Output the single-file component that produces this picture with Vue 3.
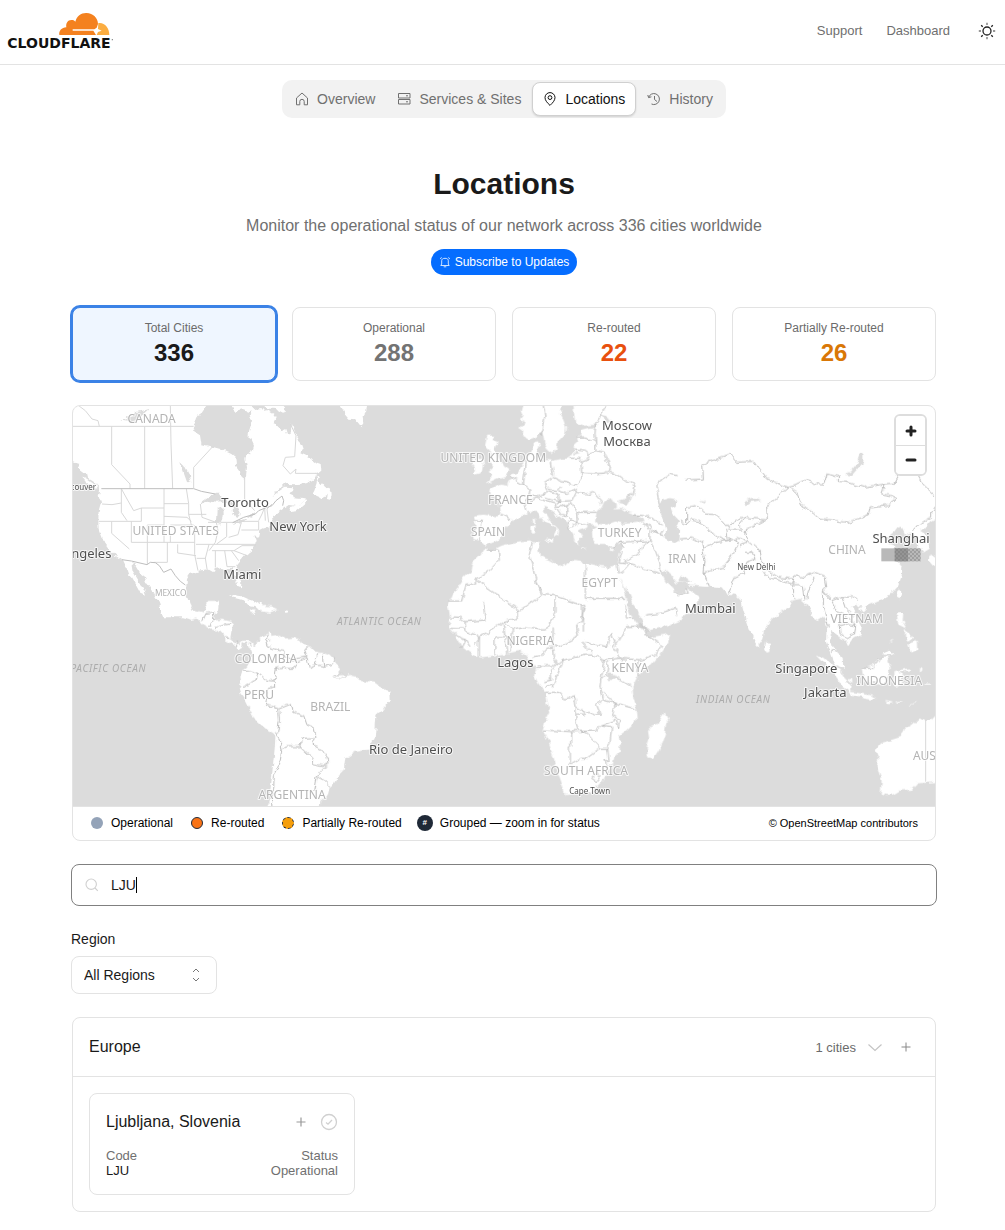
<script setup>
import { ref, computed } from 'vue'

const tabs = [
  { name: 'Overview', icon: 'home' },
  { name: 'Services & Sites', icon: 'stack' },
  { name: 'Locations', icon: 'pin' },
  { name: 'History', icon: 'history' },
]
const stats = [
  { label: 'Total Cities', value: 336, tone: 'dark' },
  { label: 'Operational', value: 288, tone: 'grey' },
  { label: 'Re-routed', value: 22, tone: 'red' },
  { label: 'Partially Re-routed', value: 26, tone: 'amber' },
]
const selected = ref('Total Cities')
const query = ref('LJU')
const region = ref('All Regions')
const allCities = [{ name: 'Ljubljana, Slovenia', code: 'LJU', status: 'Operational' }]
const cities = computed(() => allCities.filter((c) => c.code.includes(query.value.toUpperCase())))

// Map units are three to a pixel.
const labels = [
  { t: 'CANADA', x: 236, y: 51, k: 'country' },
  { t: 'UNITED STATES', x: 308, y: 387, k: 'country' },
  { t: 'MEXICO', x: 293, y: 570, k: 'minor' },
  { t: 'COLOMBIA', x: 579, y: 771, k: 'country' },
  { t: 'PERU', x: 558, y: 878, k: 'country' },
  { t: 'BRAZIL', x: 772, y: 914, k: 'country' },
  { t: 'ARGENTINA', x: 657, y: 1180, k: 'country' },
  { t: 'UNITED KINGDOM', x: 1261, y: 169, k: 'country' },
  { t: 'FRANCE', x: 1312, y: 294, k: 'country' },
  { t: 'SPAIN', x: 1245, y: 391, k: 'country' },
  { t: 'TURKEY', x: 1640, y: 392, k: 'country' },
  { t: 'IRAN', x: 1828, y: 472, k: 'country' },
  { t: 'EGYPT', x: 1580, y: 544, k: 'country' },
  { t: 'NIGERIA', x: 1372, y: 717, k: 'country' },
  { t: 'KENYA', x: 1671, y: 797, k: 'country' },
  { t: 'SOUTH AFRICA', x: 1539, y: 1107, k: 'country' },
  { t: 'CHINA', x: 2322, y: 445, k: 'country' },
  { t: 'VIETNAM', x: 2351, y: 652, k: 'country' },
  { t: 'INDONESIA', x: 2449, y: 836, k: 'country' },
  { t: 'AUSTRALIA', x: 2614, y: 1063, k: 'country' },
  { t: 'ATLANTIC OCEAN', x: 919, y: 658, k: 'ocean' },
  { t: 'PACIFIC OCEAN', x: 106, y: 799, k: 'ocean' },
  { t: 'INDIAN OCEAN', x: 1981, y: 891, k: 'ocean' },
  { t: 'Vancouver', x: 10, y: 252, k: 'town' },
  { t: 'New Delhi', x: 2050, y: 492, k: 'town' },
  { t: 'Cape Town', x: 1550, y: 1163, k: 'town' },
  { t: 'Toronto', x: 516, y: 304, k: 'city' },
  { t: 'New York', x: 675, y: 375, k: 'city' },
  { t: 'Los Angeles', x: 6, y: 457, k: 'city' },
  { t: 'Miami', x: 508, y: 519, k: 'city' },
  { t: 'Rio de Janeiro', x: 1014, y: 1044, k: 'city' },
  { t: 'Lagos', x: 1327, y: 782, k: 'city' },
  { t: 'Moscow', x: 1662, y: 72, k: 'city' },
  { t: 'Москва', x: 1662, y: 120, k: 'city' },
  { t: 'Mumbai', x: 1912, y: 622, k: 'city' },
  { t: 'Singapore', x: 2200, y: 800, k: 'city' },
  { t: 'Jakarta', x: 2257, y: 874, k: 'city' },
  { t: 'Shanghai', x: 2484, y: 411, k: 'city' },
]
</script>

<template>
  <div class="page">
    <header class="topbar">
      <a href="#" class="logo" aria-label="Cloudflare">
        <svg viewBox="0 0 345 150" width="115" height="50">
          <path fill="#f4811f" d="M178 105C176 92 185 83 199 82C197 70 203 60 214 60C219 59 223 61 226 65C230 48 243 39 258 39C278 38 294 54 294 72L290 83L283 88H218V92H280L288 105Z" />
          <path fill="#fbad41" d="M295 69C313 66 328 82 328 105H290L294 96L305 92L294 87Z" />
          <text x="22" y="143" class="brand">CLOUDFLARE</text>
          <circle cx="337" cy="119" r="2" fill="#777" />
        </svg>
      </a>
      <nav class="toplinks">
        <a href="#">Support</a>
        <a href="#">Dashboard</a>
        <button class="plain sun" aria-label="Toggle theme">
          <svg viewBox="0 0 18 18" width="18" height="18" fill="none" stroke="#222" stroke-width="1.3">
            <circle cx="9" cy="9" r="4" />
            <path d="M3.200 3.200l1.500 1.500M13.300 13.300l1.500 1.500M3.200 14.800l1.500-1.500M13.300 4.700l1.500-1.500" />
            <path stroke="#777" d="M9 .8V3M9 15v2.200M.8 9H3M15 9h2.200" />
          </svg>
        </button>
      </nav>
    </header>

    <main>
      <nav class="tabs">
        <a v-for="t in tabs" :key="t.name" href="#" class="tab" :class="{ active: t.name === 'Locations' }">
          <svg viewBox="0 0 14 14" width="14" height="14" fill="none" stroke="currentColor" stroke-width="1" stroke-linejoin="round">
            <path v-if="t.icon === 'home'" d="M1.500 6L7 1l5.500 5v6.800H9.200V9.500a2.200 2.200 0 0 0-4.400 0v3.300H1.500Z" />
            <template v-else-if="t.icon === 'stack'">
              <rect x="1.500" y="1.500" width="11.500" height="4.500" />
              <rect x="1.500" y="7.500" width="11.500" height="4.500" />
              <path d="M9 3.800h2M9 9.800h2" />
            </template>
            <template v-else-if="t.icon === 'pin'">
              <path d="M7 13.400C4.500 11 2 8.500 2 5.600a5 5 0 0 1 10 0C12 8.500 9.500 11 7 13.400Z" />
              <circle cx="7" cy="5.600" r="1.900" />
            </template>
            <path v-else d="M.8 3l.8 2.600 2.800-.8M1.700 5.300A5.500 5.500 0 1 1 4.500 12M7.500 4v3.500l2.500 2" />
          </svg>
          <span>{{ t.name }}</span>
        </a>
      </nav>

      <section class="intro">
        <h1>Locations</h1>
        <p>Monitor the operational status of our network across 336 cities worldwide</p>
        <button class="subscribe">
          <svg viewBox="0 0 12 12" width="12" height="12" fill="none" stroke="#fff" stroke-width=".8">
            <path d="M1.800 9.500l.9-1.500V4.700C2.700 3.200 3.700 2.300 6 2.300s3.300.9 3.300 2.400V8l.9 1.500ZM4.700 10.800h2.600M1.300 3l1.200-1.700M10.700 3L9.500 1.300" />
          </svg>
          <span>Subscribe to Updates</span>
        </button>
      </section>

      <section class="stats">
        <button v-for="s in stats" :key="s.label" class="stat" :class="{ selected: s.label === selected }" @click="selected = s.label">
          <span class="stat-label">{{ s.label }}</span>
          <strong :class="s.tone">{{ s.value }}</strong>
        </button>
      </section>

      <section class="mapcard">
        <div class="map">
          <svg class="world" viewBox="0 0 2586 1200" preserveAspectRatio="xMidYMid slice" role="img" aria-label="World map">
            <defs>
              <pattern id="hatch" width="12" height="12" patternUnits="userSpaceOnUse">
                <path d="M0 0L12 12M12 0L0 12" stroke="#777" stroke-width="2" />
              </pattern>
              <!-- Breaks straight coast segments into an irregular shoreline. -->
              <filter id="rough" filterUnits="userSpaceOnUse" x="-20" y="-20" width="2626" height="1240" color-interpolation-filters="sRGB">
                <feTurbulence type="fractalNoise" baseFrequency=".05" numOctaves="2" seed="4" result="n" />
                <feDisplacementMap in="SourceGraphic" in2="n" scale="18" xChannelSelector="R" yChannelSelector="G" />
              </filter>
            </defs>

            <!-- North America -->
            <g filter="url(#rough)">
              <g class="land" transform="translate(-3 -6)">
                <path d="M-20 -20H412L408 0L395 15L375 45L368 68L365 82L384 94L388 120L420 128L445 135L478 150L490 160L492 185L504 202L506 215L515 222L522 215L525 190L520 165L525 155L540 145L546 125L538 108L529 102L532 75L540 50L533 30L545 15L565 12L575 24L585 18L605 30L614 42L608 55L614 65L625 82L640 75L645 90L655 85L660 60L668 85L680 98L676 105L690 120L695 135L688 145L705 152L709 160L720 165L735 176L746 180L748 200L735 210L733 220L720 229L700 238L670 241L640 240L620 255L600 278L612 268L640 248L665 250L662 262L650 268L662 273L665 283L690 285L706 287L690 299L665 320L650 325L652 312L668 305L650 303L625 320L600 340L602 350L590 358L602 366L575 374L562 381L558 398L552 406L547 390L545 398L551 412L548 425L540 437L520 452L510 464L500 475L494 490L498 510L508 535L507 550L498 546L490 528L488 505L478 492L470 492L455 497L440 490L428 492L426 504L414 497L400 500L375 503L355 510L345 525L343 545L342 570L350 592L360 640H272L262 600L255 585L235 550L225 538L218 520L205 510L190 485L178 477L182 500L200 530L208 550L218 560L222 572L205 565L190 537L180 520L172 512L166 495L160 490L150 468L130 455L115 440L105 426L90 405L80 378L79 350L80 320L87 295L80 275L84 265L80 250L62 230L45 220L42 208L25 195L15 180L-20 165Z" />
                <path d="M30 216L46 225L75 246L72 251L50 242Z" />
                <path d="M735 215L742 218L736 233L745 242L748 235L760 250L770 248L778 262L779 277L774 287L765 285L767 272L755 278L740 281L720 272L727 260L734 240Z" />
                <path d="M648 310L668 306L682 306L705 287L705 296L675 322L655 324Z" />
                <path d="M474 0L490 20L505 16L530 24L548 21L540 10L520 0ZM565 0L585 14L610 14L633 26L646 22L635 9L615 0ZM803 0L820 30L832 44L850 46L866 66L874 55L872 40L882 22L886 0Z" />
                <path d="M470 582L490 574L510 577L530 586L550 592L574 606L560 611L535 607L520 591L500 585L485 581Z" />
              </g>
              <path class="water" d="M386 300L392 284L410 272L430 260L440 260L445 272L462 282L464 292L445 286L428 287L410 284ZM434 310L448 300L449 330L442 356L432 350ZM465 282L485 290L500 320L488 335L480 320L478 300ZM478 356L505 342L525 336L512 350ZM520 330L546 320L550 328L535 335ZM322 168L334 180L347 205L352 230L342 228L332 200ZM145 44L165 38L158 30L178 32L190 18L215 12L228 8L210 25L195 42L172 48Z" />
            </g>
            <g transform="translate(-3 -6)">
              <path class="state" d="M20 5L40 20L60 45L78 50L82 67M0 67H365M119 67V182L174 240V254M218 67V254M295 5L297 120L302 254M365 190L422 128M365 190V252M518 222V285L548 320M655 60L672 95L668 158L640 160L633 185L655 210L672 195L670 208H737M90 300L120 302L148 297M148 254V325L165 350M148 254L165 285L185 320L208 312M208 352V312H276M276 254V415M276 299H350M276 337L345 340L358 352M343 254L350 299V331H403M80 352H208M119 352V388L172 435M178 352V415M178 415H368M226 363V480M226 363H276M295 363H365M295 388V415M286 415V475H245M317 421V447L372 455M368 363V452L378 500M372 421H411L400 463L405 495M374 463H402M350 331L358 363L372 385M408 355H433L438 380L430 415L411 440M445 355H508M464 357V398L434 420M508 355L498 392L470 400M508 352H560V378H508M420 440H486L510 425H552M411 421H552M430 440V490M458 440L465 488M465 488H490M478 440L500 470M486 440L525 455M560 350L570 330L578 310L580 350M590 355L585 315L600 300M385 300L390 340L432 355" />
              <path class="country" d="M88 254H365L388 262L430 270M482 356L515 340L550 330L560 320L580 312L600 305L612 290L630 276L635 290L632 305M150 467L178 471L225 482L235 475L250 476L262 485L275 505L297 495L310 515L325 532L340 543M415 600H440" />
            </g>

            <g filter="url(#rough)">
              <!-- Central and South America -->
              <g transform="translate(-3 597)">
                <g class="land">
                  <path d="M258 -16L270 12L300 25L330 32L355 45L375 40L392 58L415 70L440 75L458 95L460 105L490 122L500 132L510 125L512 115L525 112L530 128L538 132L540 145L535 165L525 185L512 195L505 215L508 235L500 250L505 265L520 285L535 315L550 345L580 370L605 385L610 400L608 430L603 480L597 540L590 590L578 625H738L742 590L770 570L775 547L795 515L815 495L818 475L820 458L850 438L890 430L908 400L910 375L913 330L935 310L953 285L952 258L930 250L905 233L865 228L855 218L838 216L830 208L790 213L806 190L792 178L788 165L775 151L755 145L730 140L710 120L695 118L685 105L665 98L640 100L615 90L598 93L597 83L575 92L560 108L545 122L530 108L515 107L500 122L485 112L475 98L478 80L483 60L475 50L450 44L428 46L428 32L438 14L441 -12H408L395 22L365 15L350 -16Z" />
                  <path d="M555 6L578 3L598 4L620 15L600 20L590 23L565 18ZM530 16H552L545 24H533ZM636 16H650V23H637Z" />
                </g>
                <path class="country" d="M392 48L402 25L425 22V45L412 62M430 68L455 60L475 57M458 95L472 98M490 122L497 112M538 125L530 115M590 88L580 105L585 125L605 132L635 140L640 155L650 155L658 165L675 160L705 155L698 135L710 122M610 190L632 186L640 190L665 190L675 172L705 158L712 190L735 180L755 184L780 178L790 160M735 180L730 160L740 145M755 182L750 148M513 195L535 197L555 205L550 225L525 240L510 248M555 205L580 225L605 228L612 200L613 188M607 228L608 245L588 252L583 285L580 300L603 305L620 312L655 298L660 320L695 332L705 360L725 368L732 395L725 400L728 425L750 435L765 455L768 475L750 485L723 478L725 465L683 425L645 425L630 432L625 410L610 385M620 312L622 345L617 385M683 425L690 400L725 398M765 480L732 515L725 560M735 515L755 525L775 545M630 432L625 465L607 510L605 550L598 575L600 610" />
                <path class="state" d="M785 213L800 203L825 213L805 222ZM590 100V112" />
              </g>

              <!-- Europe and the Middle East -->
              <g transform="translate(1071 -6)">
                <g class="land">
                  <path d="M280 -10L272 20L278 35L270 45L285 52L268 72L280 80L277 95L296 107L320 98L332 82L340 95L343 115L351 135L365 146L380 133L384 112L405 90L408 70L400 48L390 30L400 -10Z" />
                  <path d="M430 -10L432 25L435 55L460 65L500 62L500 72L475 75L454 80L455 95L440 100L445 112L432 125L430 145L418 163L395 165L370 170L345 168L325 160L318 150L330 125L322 110L307 130L303 150L290 165L270 190L262 210L245 215L250 222L235 230L232 245L210 242L180 258L178 268L200 280L210 300L212 325L200 337L160 332L135 335L138 355L132 385L130 405L150 410L165 425L190 415L207 408L216 398L220 380L250 350L270 340L290 330L300 320L320 325L330 345L360 360L378 375L380 385L372 400L385 395L387 380L375 368L355 345L342 322L342 305L352 308L385 335L410 355L418 375L430 390L432 408L448 425L445 405L458 404L446 380L470 372L475 362L500 365L485 375L488 400L500 420L525 420L545 430L577 418L572 440L565 470L555 505L575 530L600 575L615 612L640 650L650 680L690 672L745 652L775 630L800 602L808 580L775 555L785 535L805 545L840 548L880 552V-10Z" />
                  <path d="M172 95L193 95L188 108L206 115L195 135L205 160L220 185L238 198L232 215L205 222L170 238L186 215L175 205L190 190L180 170L185 145L165 125ZM130 165H158L162 180L158 205L130 213L135 190L125 180ZM345 405L370 404L368 417ZM308 345L315 340V358L310 357ZM304 367L317 363L315 388H305ZM450 433L475 437H455ZM538 436L555 432L548 442Z" />
                </g>
                <path class="water" d="M495 350L500 325L515 310L523 292L545 285L548 295L562 303L550 313L575 312L595 325L625 335L642 350L620 357L580 360L560 352L530 362L505 360ZM565 290L590 282L608 278L590 305L568 300ZM684 308L698 290L720 283L742 288L740 305L718 312L725 330L746 348L735 368L750 380L748 413L733 419L715 412L704 396L710 377L700 345ZM688 495L705 500L725 518L740 538L765 530L784 540L782 550L765 555L768 568L748 572L735 560L720 545L706 532ZM510 30L535 38L545 52L530 57ZM436 140L450 150L432 155ZM540 505L562 528L577 548L590 603H602L575 535L557 512Z" />
                <path class="country" d="M340 5L345 35L338 70L335 95M530 5L515 30L497 60L495 85L497 115L490 110L465 102L440 102M497 115L498 140L480 150L465 138L432 135M480 150L478 165L455 175L450 163L422 163M498 140L522 145L530 165L542 195L525 207L490 210L455 208L453 175M360 170L368 215M368 220L395 232L440 245L455 225L455 208M368 220L343 235L350 255L380 260L395 245M385 260L410 268L440 255M535 205L555 208L585 230L615 245L610 270L590 280M440 265L470 270L490 262L515 290L510 303M440 260L425 290L390 292L383 270L350 262L340 275M345 282L365 288L390 292L375 305L395 308L412 305L410 315L412 338L395 335L378 310M412 305L425 295L440 325L500 325M440 325L442 355L475 362M410 330L425 345L412 355L420 378M420 350L442 355L425 370M290 165L285 205L280 240L300 255L297 275L283 295L290 320M245 220L262 232L285 245M300 275L325 278L345 270M300 290L320 282L340 290L375 300M212 330L245 345M135 350L158 352L150 380L150 410M610 332L640 335L670 345L695 360M640 355L660 365L665 380L690 392L700 375M648 362L660 385L660 410L565 415L550 435M660 410L675 440L690 480L692 500M670 385L700 395M655 412L635 425L628 445L580 475L567 475L577 440M580 475L602 478L640 495L690 508M563 480L568 510L582 500L602 478M568 415L580 428M690 310L678 245L690 230L720 210L740 215L765 228M730 560L750 575L775 568L768 550" />
              </g>

              <!-- Africa -->
              <g transform="translate(1071 597)">
                <g class="land">
                  <path d="M57 10L55 0L70 -33L100 -78L125 -103L130 -128L148 -145L165 -173L185 -163L215 -178L260 -190L300 -194L330 -188L325 -170L330 -145L360 -135L400 -113L420 -133L450 -130L500 -119L540 -113L555 -120L560 -98L580 -60L590 -20L593 5L602 30L625 60L648 82L655 97L690 92L720 85L715 110L690 145L660 180L625 215L608 250L610 280L617 305L620 345L590 375L567 393L570 440L552 460L548 482L520 525L485 560L440 565L405 567L397 540L385 505L370 455L355 410L338 375L345 350L358 325L350 295L345 262L325 235L312 210L318 190L300 170L290 148L270 138L230 145L190 152L148 158L125 148L95 125L75 88L55 68L60 35Z" />
                  <path d="M705 322L715 350L708 355L705 385L688 435L672 460L655 457L650 425L658 400L654 375L665 362L685 355L695 335Z" />
                </g>
                <path class="country" d="M170 -165L205 -165L208 -135L180 -105L135 -75L137 -63H108L95 -12H58M137 -75L270 18L335 -30L318 -70L308 -115L298 -150L308 -190M318 -70L340 -32L372 -28L465 2L457 30V80M466 -125V-20M466 -20H585M160 -12L165 45L105 50M262 12V40L220 50L172 85L145 100L140 90L108 80L105 50L90 40L60 38M375 -25V20L355 70L340 75L280 68L245 75L225 50M370 70L368 120L385 125L425 105L445 95L440 60L457 45V2M60 70L100 72M105 105L75 85M92 128L105 102L120 125M148 158V100L135 120M195 148V95H225L220 55M230 145L225 95M240 140L248 78M370 125L350 130L335 150L308 158M368 130L370 155L380 180L362 198L365 225L340 230M320 182H375M318 190H335V182M380 180L400 165L470 150L490 150L525 165L515 210L510 245L518 285L500 300L512 330L495 330L455 315L438 305L435 275L405 285L388 262H345M455 110L490 150M465 110L530 125L545 85L555 110L548 125L570 160L520 165M555 125L590 65L640 62L650 90L695 120L675 150L635 165L570 160M585 0L590 40L610 40M535 170L530 212H550L605 245M525 212L512 225M515 260L555 295L615 310M520 285L555 295L548 335L570 345L565 370L555 345L515 360L495 378L425 380L340 375M438 312V355L445 378M460 315V330H440M425 380V425H418V475L425 475L450 460L470 460L510 430L470 385L455 378M515 360L545 365L540 415L530 430L510 430M530 430L535 470L525 465L530 480L545 482M485 520L500 505L510 515L500 530ZM400 165L380 215L370 240L345 245M645 30L690 25L735 10L740 30M625 165L620 200L628 215" />
                <path class="water" d="M535 205L555 208L553 222H535Z" />
              </g>

              <!-- Asia and Australia -->
              <g transform="translate(1821 -6)">
                <g class="land">
                  <path d="M-10 -10H785V335L750 355L738 372L720 380L735 390L750 415L745 435L728 445L715 430L712 400L695 385L675 390L665 368L650 372L640 385L620 400L625 420L650 425L642 445L650 470L667 490L665 515L655 545L630 575L600 590L570 603L545 612L530 600L515 610L525 628L545 665L542 690L515 705L503 722L498 710L480 705L470 688L455 680L448 700L455 725L470 745L488 765L490 795L465 780L452 745L438 715L440 665L430 635L412 648L400 640L385 610L375 598L360 585L335 590L325 610L300 625L275 645L257 670L250 705L235 727L225 715L210 680L195 635L188 610L185 592L165 572L140 568L128 553L90 548L30 545L-10 515Z" />
                  <path d="M655 557L664 560L660 585L650 582ZM748 458L775 450V480L755 484L747 475ZM537 612L555 608L558 615L548 625ZM258 710L270 725L272 742L260 746L255 735Z" />
                </g>
                <path class="water" d="M2 513L35 532H-5ZM490 212L510 203L528 182L540 148H550V175L535 192L515 214ZM193 306L198 290L218 282L245 287L215 294L200 305ZM60 288L75 290L70 296ZM-66 308L-52 290L-30 283L-8 288L-10 305L-32 312L-25 330L-4 348L-15 368L0 380L-2 413L-17 419L-35 412L-46 396L-40 377L-50 345Z" />
                <path class="country" d="M15 228L70 225L68 180L150 152L170 175L220 172L260 225L325 250L350 265L365 305L385 315L415 342L500 355L565 335L570 312L620 305L645 285L635 275L605 270L612 240L550 250L500 235L475 232L475 218L442 207L432 240L400 238L380 228L345 245L325 250L285 285L260 310L262 345L195 380L205 410L240 440L250 490L295 520L340 525L345 515L370 520L405 505L435 518L440 550L430 560L455 590L480 580L515 575L530 590M612 240L640 238L655 210M712 212L728 240L765 275M768 305L755 325L755 342L720 358L700 380M20 360V310L48 305L75 330L110 332L145 370L165 350L195 340L257 348M0 350L20 360L35 345L60 350L85 380L135 410L170 405L175 420L155 460L130 490L72 505L85 548M0 405L35 402L68 418L72 435M72 505L75 470L68 435L85 425L110 415L145 408L140 375M145 375L185 375L175 365L195 340M170 400L205 415L180 425M195 445L218 445L225 465L200 475L190 510L160 525L145 565M250 500L265 520L335 540L340 525M340 520L338 550L345 585M340 545H370L375 590M405 515L385 560L380 585M430 560L430 605L445 670M455 590L470 620L500 640L525 660L520 690L500 702L480 690L478 665L495 660L525 665M485 580L495 610L525 640M455 740L470 745" />
              </g>
              <g transform="translate(1821 597)">
                <g class="land">
                  <path d="M406 149L430 155L450 175L478 195L490 215L512 238L510 262L490 248L470 220L440 185ZM507 261L525 262L545 266L575 272L592 283L565 283L515 272ZM545 190L560 188L580 180L605 155L612 145L625 135L640 150L625 163L632 190L610 238L580 230L565 235L548 210ZM650 22L670 20L668 50L680 72L655 58ZM685 120L710 110L712 135L695 142ZM645 198L690 190L696 195L655 202L670 212L660 225L668 240L645 245L640 220ZM625 117L643 97L635 110ZM615 285L640 290L625 295ZM645 292L670 290L655 297ZM688 300L715 286L700 297ZM720 185L728 190L720 202ZM675 75L690 85L700 95L690 110L675 95ZM728 235L750 236V239H735ZM502 222L515 218L518 230Z" />
                  <path d="M785 310L755 345L735 350L720 340L700 350L690 367L675 370L665 395L625 408L600 415L585 435L595 460L590 480L605 530L602 565L622 570L640 568L660 556L690 555L710 535L785 530Z" />
                </g>
                <path class="country" d="M545 190L580 190L600 160L605 155H635" />
              </g>
            </g>
            <path class="state" d="M2558 942V1127" />

            <g>
              <rect x="2425" y="427" width="118" height="39" fill="#b9b9b9" />
              <rect x="2465" y="427" width="40" height="39" fill="#959595" />
              <rect x="2465" y="427" width="78" height="39" fill="url(#hatch)" opacity=".6" />
            </g>
            <text v-for="l in labels" :key="l.t" :x="l.x" :y="l.y" :class="['label', l.k]">{{ l.t }}</text>
          </svg>
          <div class="zoom">
            <button aria-label="Zoom in"><svg viewBox="0 0 12 12" width="12" height="12"><path d="M6 2v8M2 6h8" /></svg></button>
            <button aria-label="Zoom out"><svg viewBox="0 0 12 12" width="12" height="12"><path d="M2 6h8" /></svg></button>
          </div>
        </div>
        <div class="legend">
          <span class="key"><i class="dot ok"></i>Operational</span>
          <span class="key"><i class="dot re"></i>Re-routed</span>
          <span class="key"><i class="dot part"></i>Partially Re-routed</span>
          <span class="key"><i class="dot group">#</i>Grouped — zoom in for status</span>
          <a href="#" class="credit">© OpenStreetMap contributors</a>
        </div>
      </section>

      <div class="search">
        <svg viewBox="0 0 14 14" width="14" height="14" fill="none" stroke="#d0d0d0" stroke-width="1.100">
          <circle cx="6.200" cy="6.200" r="5.200" /><path d="M10 10L12.800 12.800" />
        </svg>
        <input v-model="query" type="text" aria-label="Search locations" />
        <span class="caret"></span>
      </div>

      <div class="region">
        <label for="region">Region</label>
        <div class="selectwrap">
          <select id="region" v-model="region"><option>All Regions</option><option>Europe</option></select>
          <svg viewBox="0 0 10 16" width="10" height="16" fill="none" stroke="#777" stroke-width="1"><path d="M2 5L5 2L8 5M2 11L5 14L8 11" /></svg>
        </div>
      </div>

      <section class="panel">
        <div class="panelhead">
          <h2>Europe</h2>
          <span class="count">{{ cities.length }} cities</span>
          <button class="plain" aria-label="Collapse"><svg viewBox="0 0 14 14" width="14" height="14" fill="none" stroke="#c4c4c4" stroke-width="1.200"><path d="M.5 4.500L7 10.500L13.500 4.500" /></svg></button>
          <button class="plain add" aria-label="Subscribe to region"><svg viewBox="0 0 10 10" width="10" height="10" fill="none" stroke="#888" stroke-width="1"><path d="M5 .5v9M.5 5h9" /></svg></button>
        </div>
        <div class="cities">
          <article v-for="c in cities" :key="c.code" class="city-card">
            <div class="cityhead">
              <h3>{{ c.name }}</h3>
              <button class="plain" aria-label="Subscribe to city"><svg viewBox="0 0 10 10" width="10" height="10" fill="none" stroke="#999" stroke-width="1.200"><path d="M5 .5v9M.5 5h9" /></svg></button>
              <svg viewBox="0 0 18 18" width="18" height="18" fill="none" stroke="#d0d0d0" stroke-width="1.300"><circle cx="9" cy="9" r="7.500" /><path d="M6 9.500L8 11.200L12 7" /></svg>
            </div>
            <dl>
              <div><dt>Code</dt><dd class="code">{{ c.code }}</dd></div>
              <div class="right"><dt>Status</dt><dd>{{ c.status }}</dd></div>
            </dl>
          </article>
        </div>
      </section>
    </main>
  </div>
</template>

<style>
body { background: #fff; }
</style>

<style scoped>
* { box-sizing: border-box; }
.page { font-family: "Liberation Sans", Arial, sans-serif; color: #1a1a1a; font-size: 14px; padding-bottom: 18px; }
a { color: inherit; text-decoration: none; }
button, input, select { font: inherit; color: inherit; }
h1, h2, h3, p, dl, dd { margin: 0; }
svg { display: block; flex: none; }
.plain { border: 0; background: none; padding: 0; }

.topbar { display: flex; align-items: center; justify-content: space-between; height: 65px; border-bottom: 1px solid #e3e3e3; padding-right: 9px; }
.logo { align-self: flex-start; }
.brand { font-family: "DejaVu Sans", sans-serif; font-weight: bold; font-size: 42px; fill: #111; }
.toplinks { display: flex; align-items: center; gap: 24px; font-size: 13px; color: #6f6f6f; padding-bottom: 3px; }
.sun { margin-left: 4px; }

main { padding: 15px 69px 0 72px; }
.tabs { display: flex; width: fit-content; margin: 0 auto; padding: 2px; background: #f2f2f2; border-radius: 10px; }
.tab { display: flex; align-items: center; gap: 8px; height: 34px; padding: 0 10px; border: 1px solid transparent; border-radius: 8px; color: #707070; white-space: nowrap; }
.tab.active { background: #fff; border-color: #d0d0d0; color: #111; box-shadow: 0 1px 2px #0002; }

.intro { display: flex; flex-direction: column; align-items: center; padding-top: 48px; }
h1 { font-size: 30px; line-height: 36px; }
.intro p { font-size: 16px; line-height: 24px; margin-top: 12px; color: #707070; }
.subscribe { display: flex; align-items: center; gap: 4px; height: 26px; margin-top: 11px; padding: 0 8px; border: 0; border-radius: 13px; background: #056dff; color: #fff; font-size: 12px; }

.stats { display: grid; grid-template-columns: repeat(4, 1fr); gap: 16px; margin-top: 32px; }
.stat { display: flex; flex-direction: column; align-items: center; height: 74px; padding: 12px 0 0; background: #fff; border: 1px solid #e3e3e3; border-radius: 8px; }
.stat.selected { background: #eff6ff; border-color: #3b82e6; box-shadow: 0 0 0 2px #3b82e6; }
.stat-label { font-size: 12px; line-height: 16px; color: #6b6b6b; }
.stat strong { font-size: 24px; line-height: 34px; }
.grey { color: #737373; }
.red { color: #e8500e; }
.amber { color: #d97706; }

.mapcard { margin-top: 24px; border: 1px solid #e3e3e3; border-radius: 8px; overflow: hidden; }
.map { position: relative; height: 400px; background: #dcdcdc; }
.world { width: 100%; height: 100%; }
.land { fill: #fff; }
.water { fill: #dcdcdc; }
.state, .country { fill: none; stroke-width: 3; stroke-linejoin: round; }
.state { stroke: #d8d8d8; }
.country { stroke: #bebebe; }
.label { font-family: "Noto Sans", sans-serif; text-anchor: middle; paint-order: stroke; stroke: #ffffffc0; stroke-width: 6; stroke-linejoin: round; }
.country.label { font-size: 36px; fill: #b4b4b4; stroke: #ffffffc0; stroke-width: 6; }
.minor { font-size: 25px; fill: #b4b4b4; }
.ocean { font-size: 30px; font-style: italic; fill: #acacac; stroke: none; letter-spacing: 2px; }
.city { font-size: 39px; fill: #505050; }
.town { font-size: 24px; fill: #505050; }
.zoom { position: absolute; top: 8px; right: 8px; width: 33px; border: 2px solid #ddd; border-radius: 6px; background: #fff; overflow: hidden; }
.zoom button { display: flex; align-items: center; justify-content: center; width: 100%; height: 29px; padding: 0; border: 0; background: #fff; }
.zoom button + button { border-top: 1px solid #ddd; }
.zoom path { fill: none; stroke: #222; stroke-width: 3; stroke-linecap: round; }

.legend { display: flex; align-items: center; height: 34px; padding: 0 17px 2px 18px; gap: 18px; font-size: 12px; color: #000; border-top: 1px solid #e3e3e3; }
.key { display: flex; align-items: center; gap: 8px; }
.dot { width: 12px; height: 12px; border-radius: 50%; font-style: normal; }
.ok { background: #94a3b8; }
.re { background: #f97316; border: 1px solid #222b3a; }
.part { background: #f59e0b; border: 1px dashed #222b3a; }
.group { width: 16px; height: 16px; margin: 0 -1px 0 -3px; background: #1f2937; color: #fff; font-size: 8px; font-weight: bold; line-height: 16px; text-align: center; }
.credit { margin-left: auto; font-size: 11px; }

.search { position: relative; display: flex; align-items: center; gap: 12px; height: 42px; margin: 23px -1px 0; padding: 0 13px; border: 1px solid #808080; border-radius: 8px; }
.search input { flex: 1; border: 0; outline: 0; padding: 0; background: none; }
.caret { position: absolute; left: 64px; top: 12px; width: 1px; height: 16px; background: #000; }

.region { margin: 25px -1px 0; }
.region label { display: block; line-height: 16px; }
.selectwrap { position: relative; width: 146px; margin-top: 9px; }
.selectwrap select { appearance: none; width: 100%; height: 38px; padding: 0 12px; border: 1px solid #e3e3e3; border-radius: 8px; background: #fff; }
.selectwrap svg { position: absolute; right: 16px; top: 11px; pointer-events: none; }

.panel { margin-top: 23px; border: 1px solid #e3e3e3; border-radius: 8px; }
.panelhead { display: flex; align-items: center; height: 59px; padding: 0 24px 0 16px; border-bottom: 1px solid #e3e3e3; }
h2, h3 { font-size: 16px; font-weight: normal; }
.count { margin-left: auto; margin-right: 12px; font-size: 13px; color: #6b6b6b; }
.add { margin-left: 19px; }
.cities { display: grid; grid-template-columns: repeat(3, 1fr); gap: 16px; padding: 16px; }
.city-card { height: 102px; padding: 16px; border: 1px solid #e3e3e3; border-radius: 8px; }
.cityhead { display: flex; align-items: center; gap: 14px; height: 24px; }
.cityhead h3 { margin-right: auto; }
dl { display: flex; justify-content: space-between; margin-top: 14px; font-size: 13px; line-height: 15px; color: #707070; }
.right { text-align: right; }
.code { color: #1a1a1a; }
</style>
